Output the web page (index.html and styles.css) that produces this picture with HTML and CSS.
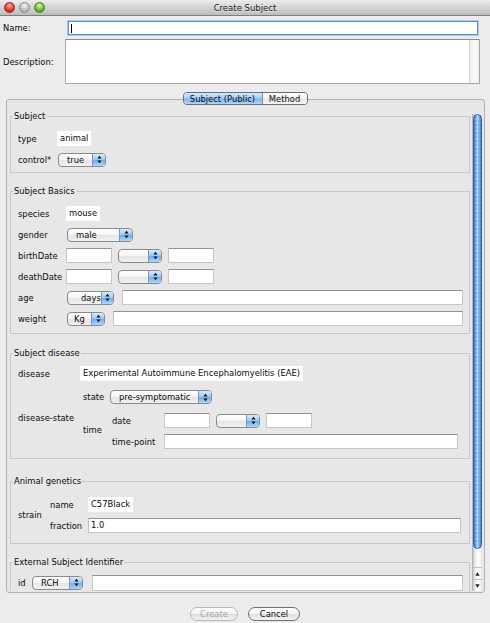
FILE: index.html
```html
<!DOCTYPE html>
<html>
<head>
<meta charset="utf-8">
<title>Create Subject</title>
<link rel="stylesheet" href="styles.css">
</head>
<body>
<div class="titlebar">
  <div class="lights"><span class="light red"></span><span class="light gray"></span><span class="light green"></span></div>
  <div class="title">Create Subject</div>
  <div></div>
</div>

<div class="head">
  <span class="hl">Name:</span>
  <div class="name-input"><span class="caret"></span></div>
  <span class="hl">Description:</span>
  <div class="desc"><div class="desc-track"></div></div>
</div>

<div class="tabs">
  <div class="seg"><span class="tab tab-on">Subject (Public)</span><span class="tab tab-off">Method</span></div>
</div>

<div class="panel">
  <div class="viewport">
    <div class="content">

      <div class="group g-subject">
        <div class="legend">Subject</div>
        <div class="row"><span class="k w39">type</span><span class="static">animal</span></div>
        <div class="row"><span class="k w39">control*</span>
          <div class="sel w48 ml1"><span class="sel-text">true</span><span class="sel-arrow"><svg width="5" height="9" viewBox="0 0 5 9"><path d="M2.5 0.8 L4.6 3.6 H0.4 Z M0.4 5.4 H4.6 L2.5 8.2 Z" fill="#111"/></svg></span></div>
        </div>
      </div>

      <div class="group g-basics">
        <div class="legend">Subject Basics</div>
        <div class="row"><span class="k w48">species</span><span class="static">mouse</span></div>
        <div class="row"><span class="k w48">gender</span>
          <div class="sel w66 ml1"><span class="sel-text">male</span><span class="sel-arrow"><svg width="5" height="9" viewBox="0 0 5 9"><path d="M2.5 0.8 L4.6 3.6 H0.4 Z M0.4 5.4 H4.6 L2.5 8.2 Z" fill="#111"/></svg></span></div>
        </div>
        <div class="row"><span class="k w48">birthDate</span>
          <span class="field w46"></span>
          <div class="sel w44 ml6"><span class="sel-text"></span><span class="sel-arrow"><svg width="5" height="9" viewBox="0 0 5 9"><path d="M2.5 0.8 L4.6 3.6 H0.4 Z M0.4 5.4 H4.6 L2.5 8.2 Z" fill="#111"/></svg></span></div>
          <span class="field w46 ml6"></span>
        </div>
        <div class="row"><span class="k w48">deathDate</span>
          <span class="field w46"></span>
          <div class="sel w44 ml6"><span class="sel-text"></span><span class="sel-arrow"><svg width="5" height="9" viewBox="0 0 5 9"><path d="M2.5 0.8 L4.6 3.6 H0.4 Z M0.4 5.4 H4.6 L2.5 8.2 Z" fill="#111"/></svg></span></div>
          <span class="field w46 ml6"></span>
        </div>
        <div class="row"><span class="k w48">age</span>
          <div class="sel w47 ml1"><span class="sel-text pad13">days</span><span class="sel-arrow"><svg width="5" height="9" viewBox="0 0 5 9"><path d="M2.5 0.8 L4.6 3.6 H0.4 Z M0.4 5.4 H4.6 L2.5 8.2 Z" fill="#111"/></svg></span></div>
          <span class="field grow ml8"></span>
        </div>
        <div class="row"><span class="k w48">weight</span>
          <div class="sel w38 ml1"><span class="sel-text pad6">Kg</span><span class="sel-arrow"><svg width="5" height="9" viewBox="0 0 5 9"><path d="M2.5 0.8 L4.6 3.6 H0.4 Z M0.4 5.4 H4.6 L2.5 8.2 Z" fill="#111"/></svg></span></div>
          <span class="field grow ml8"></span>
        </div>
      </div>

      <div class="group g-disease">
        <div class="legend">Subject disease</div>
        <div class="row"><span class="k w62">disease</span><span class="static">Experimental Autoimmune Encephalomyelitis (EAE)</span></div>
        <div class="ds">
          <span class="k w65">disease-state</span>
          <div class="ds-body">
            <div class="row r20 mt3"><span class="k w27">state</span>
              <div class="sel w102"><span class="sel-text">pre-symptomatic</span><span class="sel-arrow"><svg width="5" height="9" viewBox="0 0 5 9"><path d="M2.5 0.8 L4.6 3.6 H0.4 Z M0.4 5.4 H4.6 L2.5 8.2 Z" fill="#111"/></svg></span></div>
            </div>
            <div class="time">
              <span class="k w29">time</span>
              <div class="time-body">
                <div class="row mt3"><span class="k w52">date</span>
                  <span class="field w46"></span>
                  <div class="sel w44 ml6"><span class="sel-text"></span><span class="sel-arrow"><svg width="5" height="9" viewBox="0 0 5 9"><path d="M2.5 0.8 L4.6 3.6 H0.4 Z M0.4 5.4 H4.6 L2.5 8.2 Z" fill="#111"/></svg></span></div>
                  <span class="field w46 ml6"></span>
                </div>
                <div class="row"><span class="k w52">time-point</span><span class="field grow mr5"></span></div>
              </div>
            </div>
          </div>
        </div>
      </div>

      <div class="group g-genetics">
        <div class="legend">Animal genetics</div>
        <div class="strain">
          <span class="k w32">strain</span>
          <div class="strain-body">
            <div class="row"><span class="k w38">name</span><span class="static">C57Black</span></div>
            <div class="row"><span class="k w38">fraction</span><span class="field grow mr2 val">1.0</span></div>
          </div>
        </div>
      </div>

      <div class="group g-ext">
        <div class="legend">External Subject Identifier</div>
        <div class="row"><span class="k w14">id</span>
          <div class="sel w51"><span class="sel-text">RCH</span><span class="sel-arrow"><svg width="5" height="9" viewBox="0 0 5 9"><path d="M2.5 0.8 L4.6 3.6 H0.4 Z M0.4 5.4 H4.6 L2.5 8.2 Z" fill="#111"/></svg></span></div>
          <span class="field grow ml9 tall"></span>
        </div>
      </div>

    </div>
    <div class="vscroll">
      <div class="thumb"></div>
      <div class="track"></div>
      <div class="arrow-btn"><svg width="5" height="4" viewBox="0 0 5 4"><path d="M2.5 0.3 L4.7 3.7 H0.3 Z" fill="#222"/></svg></div>
      <div class="arrow-btn"><svg width="5" height="4" viewBox="0 0 5 4"><path d="M0.3 0.3 H4.7 L2.5 3.7 Z" fill="#222"/></svg></div>
    </div>
  </div>
</div>

<div class="buttons">
  <span class="btn btn-create">Create</span>
  <span class="btn btn-cancel">Cancel</span>
</div>
</body>
</html>
```

FILE: styles.css
```css
html, body {
  margin: 0;
  padding: 0;
}
body {
  width: 490px;
  height: 623px;
  overflow: hidden;
  background: #ececec;
  font-family: "DejaVu Sans", "Liberation Sans", sans-serif;
  font-size: 8.4px;
  color: #0a0a0a;
}

/* title bar */
.titlebar {
  height: 15px;
  border-bottom: 1px solid #7f7f7f;
  background: linear-gradient(#ececec, #d2d2d2 55%, #bcbcbc);
  display: grid;
  grid-template-columns: 1fr auto 1fr;
  align-items: center;
}
.lights {
  display: flex;
  gap: 4px;
  padding-left: 4px;
}
.light {
  width: 11px;
  height: 11px;
  border-radius: 50%;
  box-sizing: border-box;
}
.red {
  background: radial-gradient(circle at 50% 30%, #ffc2bb 0, #f2473d 45%, #a8150f 100%);
  border: 1px solid #8d2b25;
}
.gray {
  background: radial-gradient(circle at 50% 30%, #f7f7f7 0, #c4c4c4 50%, #949494 100%);
  border: 1px solid #8e8e8e;
}
.green {
  background: radial-gradient(circle at 50% 30%, #e0f8b4 0, #7ec73e 45%, #3c8013 100%);
  border: 1px solid #4e7f2c;
}
.title {
  font-size: 8.5px;
  color: #1a1a1a;
  text-shadow: 0 1px 0 rgba(255, 255, 255, 0.55);
}

/* name / description */
.head {
  display: grid;
  grid-template-columns: 62px 1fr;
  row-gap: 4px;
  padding: 5px 10px 0 3px;
  align-items: center;
}
.name-input {
  height: 14px;
  box-sizing: border-box;
  margin: 0 2px 0 3px;
  background: #fff;
  border: 1px solid #5d8fd5;
  box-shadow: 0 0 0 1px #a9c7ef;
  display: flex;
  align-items: center;
  padding-left: 2px;
}
.caret {
  width: 1px;
  height: 9px;
  background: #000;
}
.desc {
  height: 45px;
  box-sizing: border-box;
  background: #fff;
  border: 1px solid #aaa;
  border-top-color: #8c8c8c;
  display: flex;
  justify-content: flex-end;
}
.desc-track {
  width: 9px;
  border-left: 1px solid #d4d4d4;
  background: linear-gradient(to right, #ededed, #fafafa 50%, #eeeeee);
}

/* tabs */
.tabs {
  display: flex;
  justify-content: center;
  margin-top: 8px;
  margin-bottom: -6px;
  position: relative;
  z-index: 1;
}
.seg {
  display: flex;
  height: 13px;
  box-sizing: border-box;
  border: 1px solid #6e6e6e;
  border-radius: 4px;
  overflow: hidden;
}
.tab {
  display: flex;
  align-items: center;
  justify-content: center;
  color: #0a0a0a;
}
.tab-on {
  width: 78px;
  background: linear-gradient(#d3e8fd, #a7cff8 45%, #7fb6f1 55%, #acd7fc);
}
.tab-off {
  width: 44px;
  border-left: 1px solid #8a8a8a;
  background: linear-gradient(#ffffff, #f6f6f6 45%, #e7e7e7 55%, #f7f7f7);
}

/* tab panel */
.panel {
  margin: 0 5px 0 6px;
  border: 1px solid #b2b2b2;
  border-radius: 3px;
  background: #e7e7e7;
  padding: 11px 2px 1px 0;
}
.viewport {
  display: flex;
  height: 480px;
  overflow: hidden;
}
.content {
  flex: 1;
  min-width: 0;
  padding: 5px 2px 0 3px;
}

/* groups */
.group {
  border: 1px solid #c8c8c8;
  padding: 0 6px 2px 7px;
}
.legend {
  margin: -6px 0 7px -5px;
  width: fit-content;
  padding: 0 1px;
  line-height: 10px;
  background: #e7e7e7;
}
.g-basics { margin-top: 18px; padding-bottom: 4px; }
.g-disease { margin-top: 19px; padding-bottom: 6px; }
.g-disease .legend { margin-bottom: 5px; }
.g-genetics { margin-top: 22px; padding-bottom: 7px; }
.g-genetics .legend { margin-bottom: 8px; }
.g-ext { margin-top: 18px; }
.g-ext .legend { margin-bottom: 5px; }

.row {
  display: flex;
  align-items: center;
  height: 21px;
}
.r20 { height: 20px; }
.mt3 { margin-top: 3px; }
.k {
  flex: none;
  white-space: nowrap;
}
.w14 { width: 14px; }
.w27 { width: 27px; }
.w29 { width: 29px; }
.w32 { width: 32px; }
.w38 { width: 38px; }
.w39 { width: 39px; }
.w44 { width: 44px; }
.w46 { width: 46px; }
.w47 { width: 47px; }
.w48 { width: 48px; }
.w51 { width: 51px; }
.w52 { width: 52px; }
.w62 { width: 62px; }
.w65 { width: 65px; }
.w66 { width: 66px; }
.w102 { width: 102px; }
.ml1 { margin-left: 1px; }
.ml6 { margin-left: 6px; }
.ml8 { margin-left: 8px; }
.ml9 { margin-left: 9px; }
.mr2 { margin-right: 2px; }
.mr5 { margin-right: 5px; }
.grow { flex: 1; min-width: 0; }

.static {
  background: #fff;
  height: 15px;
  line-height: 15px;
  padding: 0 3px;
  white-space: nowrap;
}
.field {
  height: 15px;
  box-sizing: border-box;
  background: #fff;
  border: 1px solid #c6c6c6;
  border-top-color: #939393;
  flex-shrink: 0;
}
.field.grow { flex-shrink: 1; }
.tall { height: 16px; }
.val {
  line-height: 13px;
  padding-left: 2px;
}

/* popup buttons */
.sel {
  flex: none;
  height: 14px;
  box-sizing: border-box;
  display: flex;
  border: 1px solid #8a8a8a;
  border-radius: 4px;
  overflow: hidden;
  background: linear-gradient(#ffffff, #f6f6f6 45%, #e5e5e5 55%, #f2f2f2);
}
.sel-text {
  flex: 1;
  padding-left: 8px;
  line-height: 12px;
  white-space: nowrap;
}
.pad13 { padding-left: 13px; }
.pad6 { padding-left: 6px; }
.sel-arrow {
  width: 12px;
  border-left: 1px solid #7e93b6;
  display: flex;
  align-items: center;
  justify-content: center;
  background: linear-gradient(#d7eafc, #a1cbf6 45%, #72adef 55%, #acd8fc);
}

/* disease-state layout */
.ds {
  display: flex;
  align-items: center;
}
.ds-body {
  flex: 1;
  min-width: 0;
  display: flex;
  flex-direction: column;
}
.time {
  display: flex;
  align-items: center;
}
.time-body {
  flex: 1;
  min-width: 0;
  display: flex;
  flex-direction: column;
}
.strain {
  display: flex;
  align-items: center;
}
.strain-body {
  flex: 1;
  min-width: 0;
  display: flex;
  flex-direction: column;
}

/* scrollbar */
.vscroll {
  flex: none;
  width: 10px;
  margin-top: 3px;
  display: flex;
  flex-direction: column;
  box-sizing: border-box;
  background: linear-gradient(to right, #c9c9c9, #f1f1f1 30%, #ffffff 60%, #e9e9e9);
  border-left: 1px solid #b4b4b4;
}
.thumb {
  height: 435px;
  border-radius: 5px;
  background:
    repeating-linear-gradient(0deg, rgba(255, 255, 255, 0.14) 0 2px, rgba(0, 0, 0, 0) 2px 4px),
    linear-gradient(to right, #3169bf, #6fa8ee 30%, #acd4fb 50%, #6ea8ee 72%, #3b76cb);
  border: 1px solid #2f5fa8;
  box-sizing: border-box;
}
.track {
  flex: 1;
}
.arrow-btn {
  height: 12px;
  display: flex;
  align-items: center;
  justify-content: center;
  border-top: 1px solid #c2c2c2;
  box-sizing: border-box;
}

/* bottom buttons */
.buttons {
  display: flex;
  justify-content: center;
  gap: 10px;
  margin-top: 14px;
}
.btn {
  height: 14px;
  box-sizing: border-box;
  border-radius: 7px;
  border: 1px solid #6f6f6f;
  background: linear-gradient(#ffffff, #f4f4f4 45%, #dfdfdf 55%, #f4f4f4);
  display: flex;
  align-items: center;
  justify-content: center;
}
.btn-create {
  width: 48px;
  color: #a6a6a6;
  border-color: #b8b8b8;
}
.btn-cancel {
  width: 52px;
}
```
